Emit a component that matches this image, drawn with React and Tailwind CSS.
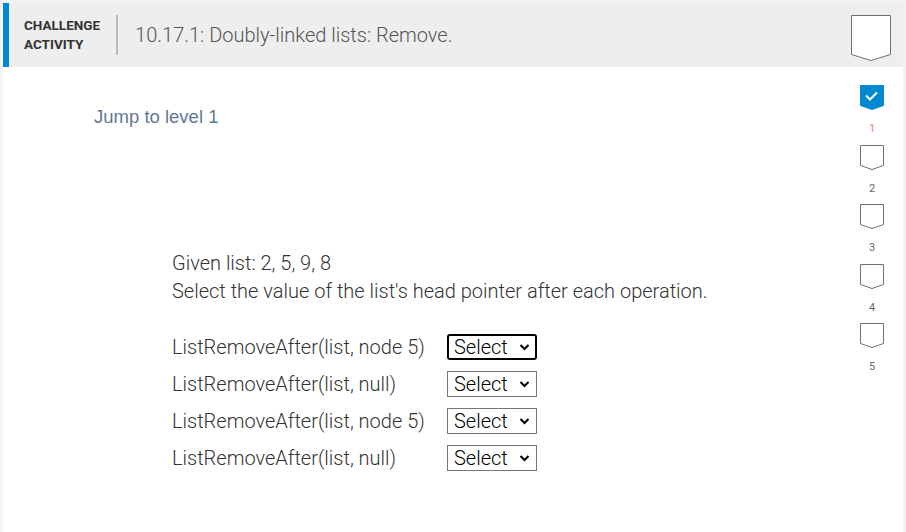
import React from 'react';

const Shield = ({ w, h, tip, filled }) => (
  <svg width={w} height={h} viewBox={`0 0 ${w} ${h}`}>
    <path
      d={`M0.5 0.5 H${w - 0.5} V${h - tip - 0.5} L${w / 2} ${h - 0.5} L0.5 ${h - tip - 0.5} Z`}
      fill={filled ? '#0288d1' : 'white'}
      stroke={filled ? '#0288d1' : '#707070'}
      strokeWidth="1"
    />
    {filled && (
      <path d={`M6 ${h / 2 - 2} L10 ${h / 2 + 2} L17 ${h / 2 - 5}`} fill="none" stroke="white" strokeWidth="2" />
    )}
  </svg>
);

const rows = [
  { op: 'ListRemoveAfter(list, node 5)', focus: true },
  { op: 'ListRemoveAfter(list, null)' },
  { op: 'ListRemoveAfter(list, node 5)' },
  { op: 'ListRemoveAfter(list, null)' },
];

export default function App() {
  return (
    <div className="w-[906px] h-[532px] bg-[#f2f2f2] pt-[3px] px-[3px] overflow-hidden" style={{ fontFamily: 'Roboto, sans-serif' }}>
      <div className="bg-white h-full flex flex-col">
        {/* Header */}
        <div className="h-[64px] bg-[#eeeeee] flex items-center shrink-0">
          <div className="w-[6px] h-full bg-[#0288d1]" />
          <div className="ml-[15px] text-[13.5px] font-bold leading-[19px] text-[#333]">
            CHALLENGE<br />ACTIVITY
          </div>
          <div className="ml-[16px] w-[2px] h-[40px] bg-[#bbbbbb]" />
          <div className="ml-[17px] text-[20px] text-[#555] flex-1 font-light">10.17.1: Doubly-linked lists: Remove.</div>
          <div className="mr-[12px] mt-[6px]">
            <Shield w={40} h={46} tip={6} />
          </div>
        </div>

        <div className="flex flex-1">
          {/* Main */}
          <div className="flex-1 pl-[91px] pt-[36px]">
            <div className="text-[18.5px] text-[#5f7896]" style={{ fontFamily: '"Liberation Sans", Arial, sans-serif' }}>Jump to level 1</div>
            <div className="ml-[78px] mt-[118px] text-[#333]">
              <div className="text-[20px] leading-[28px] font-light">Given list: 2, 5, 9, 8</div>
              <div className="text-[20px] leading-[28px] font-light">Select the value of the list's head pointer after each operation.</div>
              <div className="mt-[29px] flex flex-col gap-[11px]">
                {rows.map((r, i) => (
                  <div key={i} className="flex items-center h-[26px]">
                    <div className="w-[275px] text-[20px] font-light">{r.op}</div>
                    <div
                      className={`w-[90px] h-[26px] flex items-center justify-between bg-white text-black text-[20px] ${
                        r.focus ? 'border-2 border-black rounded-[3px] pl-[5px] pr-[5px]' : 'border border-[#767676] pl-[6px] pr-[6px]'
                      }`}
                    >
                      <span className="font-light">Select</span>
                      <svg width="11" height="8" viewBox="0 0 11 8">
                        <path d="M1.5 2 L5.5 6 L9.5 2" fill="none" stroke="black" strokeWidth="2" />
                      </svg>
                    </div>
                  </div>
                ))}
              </div>
            </div>
          </div>

          {/* Level column */}
          <div className="w-[62px] flex flex-col items-center pt-[18px]">
            {[1, 2, 3, 4, 5].map((n) => (
              <div key={n} className="flex flex-col items-center h-[59.5px]">
                <Shield w={24} h={25} tip={4} filled={n === 1} />
                <div className={`text-[11px] mt-[13px] leading-[12px] ${n === 1 ? 'text-[#e08a6a]' : 'text-[#666]'}`}>{n}</div>
              </div>
            ))}
          </div>
        </div>
      </div>
    </div>
  );
}
